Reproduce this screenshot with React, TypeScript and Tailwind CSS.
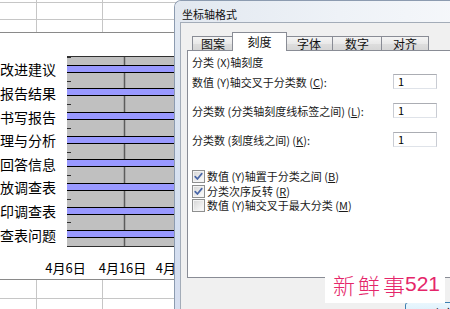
import React from "react";

const cjk = "font-['Noto_Sans_CJK_SC',sans-serif]";

const labels = [
  "提出改进建议",
  "撰写报告结果",
  "书写报告",
  "整理与分析",
  "回答信息",
  "发放调查表",
  "打印调查表",
  "调查表问题",
];

function GridCells() {
  return (
    <>
      <div className="w-[37px] shrink-0 border-r border-[#c6c6c6]" />
      <div className="w-[66px] shrink-0 border-r border-[#c6c6c6]" />
      <div className="flex-1" />
    </>
  );
}

function Plot() {
  const W = 130;
  const H = 191;
  const band = 189 / 8;
  const bars = [];
  const ticks = [];
  for (let i = 0; i < 8; i++) {
    const c = 1 + band * (i + 0.5);
    const y = Math.round(c - 4);
    bars.push(
      <g key={"b" + i}>
        <rect x={0} y={y} width={W} height={8} fill="#9999ff" />
        <line x1={0} x2={W} y1={y + 0.5} y2={y + 0.5} stroke="#000" strokeWidth={1} />
        <line x1={0} x2={W} y1={y + 7.5} y2={y + 7.5} stroke="#000" strokeWidth={1} />
      </g>
    );
  }
  for (let k = 0; k <= 8; k++) {
    const y = Math.round(1 + band * k) + 0.5;
    ticks.push(
      <line key={"t" + k} x1={0} x2={4} y1={y} y2={y} stroke="#303030" strokeWidth={1} />
    );
  }
  return (
    <svg width={W} height={H} className="block shrink-0">
      <rect x={0} y={0} width={W} height={H} fill="#c0c0c0" />
      <line x1={57.5} x2={57.5} y1={0} y2={H} stroke="#5c5c5c" strokeWidth={1.5} />
      {bars}
      <line x1={0} x2={W} y1={0.5} y2={0.5} stroke="#303030" strokeWidth={1} />
      <line x1={0} x2={W} y1={H - 0.5} y2={H - 0.5} stroke="#303030" strokeWidth={1} />
      {ticks}
    </svg>
  );
}

function Sheet() {
  return (
    <div className={`flex flex-col ${cjk} text-black`}>
      <div className="flex h-[3px] border-b border-[#c6c6c6]">
        <GridCells />
      </div>
      <div className="flex h-[17px] border-b border-[#c6c6c6]">
        <GridCells />
      </div>
      <div className="flex h-[12px]">
        <GridCells />
      </div>
      <div className="h-[248px] border-y border-[#8a8a8a] flex flex-col">
        <div className="h-[23px]" />
        <div className="flex">
          <div className="w-[67px] shrink-0 h-[191px] py-[1px] flex flex-col">
            {labels.map((l) => (
              <div
                key={l}
                className="flex-1 w-[67px] flex items-center justify-end pr-[11px] text-[14px] leading-[14px] pt-[1px]"
              >
                <span className="whitespace-nowrap shrink-0">{l}</span>
              </div>
            ))}
          </div>
          <Plot />
        </div>
        <div className="mt-[14px] flex pl-[37px] text-[13px] leading-[13px]">
          {["4月6日", "4月16日", "4月26日"].map((d) => (
            <div key={d} className="w-[57px] shrink-0 text-center whitespace-nowrap">
              {d}
            </div>
          ))}
        </div>
      </div>
      <div className="flex h-[19px] border-b border-[#c6c6c6]">
        <GridCells />
      </div>
      <div className="flex h-[20px]">
        <GridCells />
      </div>
    </div>
  );
}

function Tab({ label, w }: { label: string; w: string }) {
  return (
    <div
      className={`${w} shrink-0 h-[14px] border border-b-0 border-[#898c95] bg-[linear-gradient(180deg,#f4f4f4,#e9e9e9_50%,#dedede_51%,#d6d6d6)] flex items-center justify-center text-[12px] leading-[12px] text-[#111]`}
    >
      {label}
    </div>
  );
}

function Box({ checked }: { checked: boolean }) {
  return (
    <svg width={13} height={13} className="block shrink-0">
      <defs>
        <linearGradient id="cbg" x1="0" y1="0" x2="1" y2="1">
          <stop offset="0" stopColor="#d8d8d8" />
          <stop offset="1" stopColor="#fbfbfb" />
        </linearGradient>
      </defs>
      <rect x={0.5} y={0.5} width={12} height={12} fill="#f4f4f4" stroke="#8e8f8f" />
      <rect x={2} y={2} width={9} height={9} fill="url(#cbg)" />
      {checked && (
        <path
          d="M3.2 6.6 L5.4 9 L9.8 3.6"
          fill="none"
          stroke="#4a67a8"
          strokeWidth={1.7}
          strokeLinecap="round"
          strokeLinejoin="round"
        />
      )}
    </svg>
  );
}

function Field({ label, mt }: { label: React.ReactNode; mt: string }) {
  return (
    <div className={`${mt} flex items-center h-[15px]`}>
      <div className="w-[201px] shrink-0 whitespace-nowrap leading-[12px]">{label}</div>
      <div className="w-[44px] h-[15px] border border-[#abadb3] border-x-[#c9ccd3] border-b-[#dfe3e9] bg-white pl-[4px] text-[11px] leading-[13px] text-black">
        1
      </div>
    </div>
  );
}

function CheckRow({ mt, checked, children }: { mt: string; checked: boolean; children: React.ReactNode }) {
  return (
    <div className={`${mt} h-[14px] flex items-center gap-[2px] whitespace-nowrap`}>
      <Box checked={checked} />
      <span className="leading-[12px]">{children}</span>
    </div>
  );
}

function Dialog() {
  return (
    <div
      className={`absolute left-[174px] top-0 w-[300px] h-[330px] rounded-tl-[7px] border-l border-t border-[#8c9bb0] bg-[linear-gradient(180deg,#e3eaf3,#d3def0_70%,#d8dff0)] flex flex-col ${cjk}`}
    >
      <div className="h-[21px] shrink-0 pl-[7px] pt-[4px] flex items-center text-[11px] leading-[12px] text-[#111] rounded-tl-[6px] bg-[linear-gradient(90deg,#e2e8f0,#eef2f7_55%,#f6f8fb)]">
        坐标轴格式
      </div>
      <div className="ml-[5px] flex-1 border-l border-t border-[#a3acb8] bg-[#f0f0f0] flex flex-col">
        <div className="h-[27px] shrink-0 flex items-end pl-[11px]">
          <Tab label="图案" w="w-[42px]" />
          <div className="relative z-10 w-[55px] shrink-0 -mx-[2px] h-[19px] mb-[-1px] border border-b-0 border-[#898c95] bg-white flex items-center justify-center text-[12px] leading-[12px] text-[#111]">
            刻度
          </div>
          <Tab label="字体" w="w-[48px]" />
          <div className="-ml-px">
            <Tab label="数字" w="w-[50px]" />
          </div>
          <div className="-ml-px">
            <Tab label="对齐" w="w-[48px]" />
          </div>
        </div>
        <div className="ml-[6px] h-[228px] shrink-0 border border-[#898c95] bg-white flex flex-col pl-[4px] text-[11px] leading-[14px] text-[#1a1a1a]">
          <div className="mt-[4px] h-[14px] flex items-center whitespace-nowrap">
            <span className="leading-[12px]">分类 (X)轴刻度</span>
          </div>
          <Field
            mt="mt-[5px]"
            label={
              <>
                数值 (Y)轴交叉于分类数 (<span className="underline">C</span>):
              </>
            }
          />
          <Field
            mt="mt-[14px]"
            label={
              <>
                分类数 (分类轴刻度线标签之间) (<span className="underline">L</span>):
              </>
            }
          />
          <Field
            mt="mt-[14px]"
            label={
              <>
                分类数 (刻度线之间) (<span className="underline">K</span>):
              </>
            }
          />
          <CheckRow mt="mt-[22px]" checked>
            数值 (Y)轴置于分类之间 (<span className="underline">B</span>)
          </CheckRow>
          <CheckRow mt="mt-[1px]" checked>
            分类次序反转 (<span className="underline">R</span>)
          </CheckRow>
          <CheckRow mt="mt-0" checked={false}>
            数值 (Y)轴交叉于最大分类 (<span className="underline">M</span>)
          </CheckRow>
        </div>
        <div className="mt-[24px] pl-[224px] flex">
          <div className="w-[75px] h-[23px] shrink-0 rounded-[3px] border border-[#3c7fb1] bg-[linear-gradient(180deg,#eaf6fd,#d9f0fc_50%,#bee6fd_51%,#a7d9f5)] flex items-center justify-center text-[12px] leading-[12px] text-black">
            确定
          </div>
        </div>
      </div>
    </div>
  );
}

function Watermark() {
  return (
    <div className="absolute left-[325px] top-[270px] w-[120px] h-[33px] bg-white flex items-center pl-[8px] pb-[6px] text-[#e5266a] whitespace-nowrap">
      <span className="font-['Noto_Sans_CJK_SC',serif] font-light text-[22px] leading-[24px] tracking-[3px]">
        新鲜事
      </span>
      <span className="-ml-[3px] font-['Liberation_Sans',sans-serif] text-[21px] leading-[24px]">
        521
      </span>
    </div>
  );
}

export default function App() {
  return (
    <div className="relative w-[450px] h-[309px] overflow-hidden bg-white">
      <Sheet />
      <Dialog />
      <Watermark />
    </div>
  );
}
